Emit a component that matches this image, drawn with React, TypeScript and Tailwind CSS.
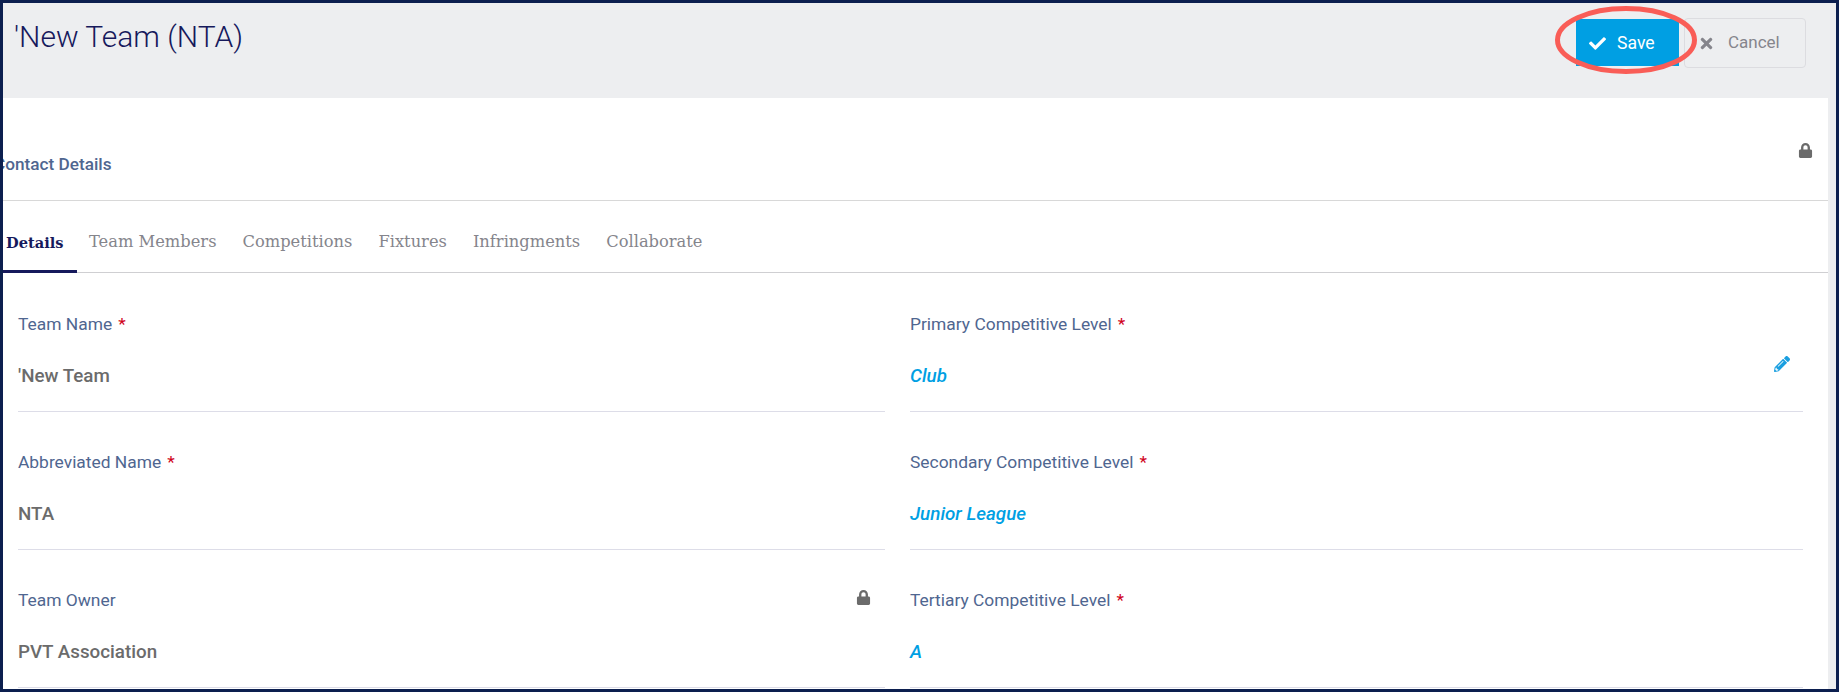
import { FaCheck, FaLock, FaPencilAlt, FaTimes } from 'react-icons/fa';

const tabs = ['Team Members', 'Competitions', 'Fixtures', 'Infringments', 'Collaborate'];

function Field({
  label,
  value,
  required,
  link,
  locked,
  editable,
}: {
  label: string;
  value: string;
  required?: boolean;
  link?: boolean;
  locked?: boolean;
  editable?: boolean;
}) {
  return (
    <div className="h-[138px] flex flex-col border-b border-[#dddde8]">
      <div className="flex items-center justify-between h-[20px] mt-[40px] text-[17.4px] text-[#4f6690]">
        <span>
          {label}
          {required && <span className="text-[#d0021b] ml-[6px]">*</span>}
        </span>
        {locked && <FaLock className="text-[#6b6b6b] text-[15px] mr-[14px] mb-[6px]" />}
      </div>
      <div className="flex items-center justify-between h-[22px] mt-[31px] text-[18.8px] font-medium">
        {link ? (
          <span className="italic text-[#009fe3]">{value}</span>
        ) : (
          <span className="text-[#6b6b6b]">{value}</span>
        )}
        {editable && <FaPencilAlt className="text-[#1a9fe0] text-[16px] mr-[13px] mb-[24px]" />}
      </div>
    </div>
  );
}

export default function App() {
  return (
    <div className="relative w-[1839px] h-[692px] overflow-hidden border-[3px] border-[#0c1f4f] bg-[#edeef0] font-['Roboto',sans-serif]">
      <header className="h-[95px] flex justify-between items-start pl-[11px] pr-[30px]">
        <h1 className="mt-[14px] text-[30px] leading-[40px] font-light text-[#16195c]">'New Team (NTA)</h1>
        <div className="flex items-start mt-[15px] gap-[5px]">
          <button className="w-[103px] h-[47px] mt-[1px] pt-[1px] flex items-center pl-[13px] bg-[#009fe3] text-white text-[17.6px]">
            <FaCheck className="text-[17px] mr-[11px]" />
            Save
          </button>
          <button className="w-[122px] h-[50px] flex items-center pl-[16px] border border-[#dcdce0] rounded-[4px] text-[#85858c] text-[17px]">
            <FaTimes className="text-[17px] mr-[13px] -ml-[3px]" />
            Cancel
          </button>
        </div>
      </header>

      <main className="mr-[8px] bg-white h-[591px] overflow-hidden">
        <div className="h-[103px] flex items-center justify-between border-b border-[#d8d8d8] pt-[31px] pr-[15px]">
          <span className="-ml-[9px] text-[17.2px] font-medium text-[#4f6690]">Contact Details</span>
          <FaLock className="text-[#6b6b6b] text-[15px] -mt-[28px]" />
        </div>

        <nav className="h-[72px] flex items-end border-b border-[#cfcfd2] font-['DejaVu_Serif',serif] text-[16.3px]">
          <div className="h-[72px] w-[74px] pl-[3px] pt-[15px] flex items-center border-b-[3px] border-[#16195c] -mb-px font-bold text-[#16195c] text-[14.6px]">
            Details
          </div>
          <div className="h-[72px] pt-[13px] flex items-center gap-[26px] pl-[12px] text-[#85858c]">
            {tabs.map((tab) => (
              <span key={tab}>{tab}</span>
            ))}
          </div>
        </nav>

        <div className="mt-[1px] grid grid-cols-[867px_893px] gap-x-[25px] pl-[15px]">
          <div>
            <Field label="Team Name" value="'New Team" required />
            <Field label="Abbreviated Name" value="NTA" required />
            <Field label="Team Owner" value="PVT Association" locked />
          </div>
          <div>
            <Field label="Primary Competitive Level" value="Club" required link editable />
            <Field label="Secondary Competitive Level" value="Junior League" required link />
            <Field label="Tertiary Competitive Level" value="A" required link />
          </div>
        </div>
      </main>

      {/* red annotation circled around the save button */}
      <svg className="absolute left-[1550px] top-[0px]" width="150" height="76" viewBox="0 0 150 76" fill="none">
        <ellipse cx="73" cy="37" rx="68.5" ry="31.5" stroke="#f95d57" strokeWidth="5" />
      </svg>
    </div>
  );
}
